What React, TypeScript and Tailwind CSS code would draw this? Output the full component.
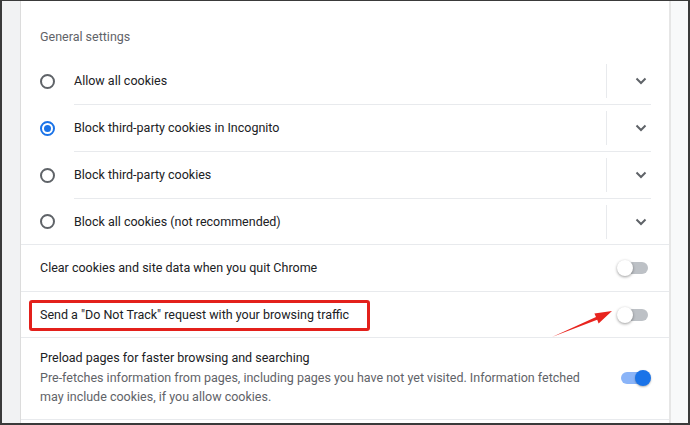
import React from "react";

const Radio = ({ checked }: { checked?: boolean }) =>
  checked ? (
    <div className="w-[15px] h-[15px] rounded-full border-2 border-[#1a73e8] flex items-center justify-center">
      <div className="w-[7px] h-[7px] rounded-full bg-[#1a73e8]"></div>
    </div>
  ) : (
    <div className="w-[15px] h-[15px] rounded-full border-2 border-[#5f6368]"></div>
  );

const Chevron = () => (
  <svg width="12" height="8" viewBox="0 0 12 8" fill="none">
    <path d="M1.5 1.5 L6 6 L10.5 1.5" stroke="#5f6368" strokeWidth="2" />
  </svg>
);

const Toggle = ({ on }: { on?: boolean }) => (
  <div className="relative w-[34px] h-[16px]">
    <div
      className={
        on
          ? "absolute left-[4px] right-[1px] top-[2px] h-[12px] rounded-full bg-[#8ab4f8]"
          : "absolute left-[3px] right-[3px] top-[2px] h-[12px] rounded-full bg-[#bdc1c6]"
      }
    ></div>
    <div
      className={
        on
          ? "absolute right-0 top-0 w-[16px] h-[16px] rounded-full bg-[#1a73e8] shadow-[0_1px_2px_rgba(0,0,0,0.3)]"
          : "absolute left-0 top-0 w-[16px] h-[16px] rounded-full bg-white shadow-[0_1px_3px_rgba(0,0,0,0.4)]"
      }
    ></div>
  </div>
);

const radios = [
  { label: "Allow all cookies" },
  { label: "Block third-party cookies in Incognito", checked: true },
  { label: "Block third-party cookies" },
  { label: "Block all cookies (not recommended)" },
];

export default function App() {
  return (
    <div
      className="relative w-[690px] h-[425px] overflow-hidden flex bg-[#f3f4f5] border-[#3a3a3a] border-l-2 border-r-2 border-t border-b-2 text-[12.5px] text-[#202124]"
      style={{ fontFamily: "Roboto, 'Liberation Sans', sans-serif" }}
    >
      <div className="w-[18px] shrink-0 bg-[#f1f2f3]"></div>
      <div className="w-[651px] shrink-0 bg-white border-l border-[#dcdcdc] border-r-2 border-r-[#e6e6e6]">
        <div className="h-[57px] pt-[26px] pl-[19px] leading-[20px] text-[#5f6368]">
          General settings
        </div>

        <div className="pl-[19px] pr-[18px] border-b border-[#e8eaed]">
          {radios.map((r, i) => (
            <div key={i} className="flex items-center">
              <div className="w-[34px] shrink-0">
                <Radio checked={r.checked} />
              </div>
              <div
                className={
                  i < radios.length - 1
                    ? "flex-1 h-[47px] flex items-center border-b border-[#e8eaed]"
                    : "flex-1 h-[45px] flex items-center"
                }
              >
                <div className="flex-1 leading-[20px]">{r.label}</div>
                <div className="w-px h-[34px] bg-[#e8eaed]"></div>
                <div className="w-[44px] flex justify-end pr-[4px]">
                  <Chevron />
                </div>
              </div>
            </div>
          ))}
        </div>

        <div className="h-[47px] flex items-center pl-[19px] pr-[18px] border-b border-[#e8eaed]">
          <div className="flex-1 leading-[20px]">
            Clear cookies and site data when you quit Chrome
          </div>
          <Toggle />
        </div>

        <div className="relative h-[46px] flex items-center pl-[19px] pr-[18px] border-b border-[#e8eaed]">
          <div className="flex-1 leading-[20px]">
            Send a "Do Not Track" request with your browsing traffic
          </div>
          <Toggle />
          <div className="absolute left-[8px] top-[8px] w-[341px] h-[31px] border-[3px] border-[#e3201b] rounded-[3px]"></div>
        </div>

        <div className="h-[82px] flex items-start pl-[19px] pr-[18px] pt-[10px] border-b border-[#e8eaed]">
          <div className="flex-1">
            <div className="leading-[20px]">Preload pages for faster browsing and searching</div>
            <div className="leading-[19px] text-[#5f6368]">
              Pre-fetches information from pages, including pages you have not yet visited. Information fetched
              <br />
              may include cookies, if you allow cookies.
            </div>
          </div>
          <div className="pt-[22px]">
            <Toggle on />
          </div>
        </div>
      </div>
      <div className="flex-1 bg-[#f8f9fa]"></div>

      <svg className="absolute left-0 top-0 pointer-events-none" width="690" height="425">
        <polygon
          points="552,337 597.2,319.8 598.6,323.5 612,311 594.4,313.4 596,317"
          transform="translate(-2,-1)"
          fill="#e8241e"
        />
      </svg>
    </div>
  );
}
